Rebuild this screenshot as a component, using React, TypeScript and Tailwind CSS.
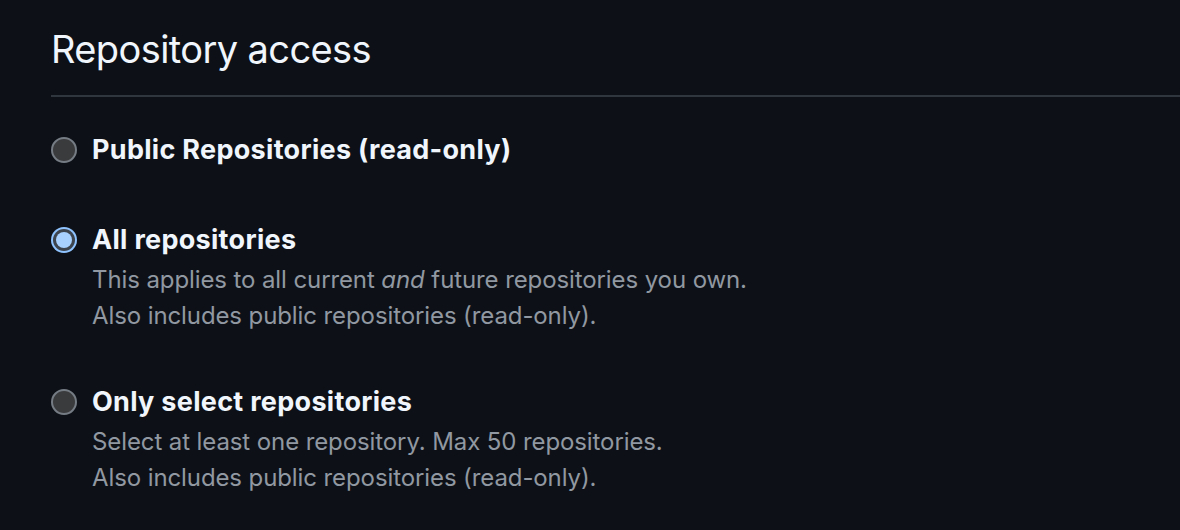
import React from "react";

interface Option {
  id: string;
  label: string;
  description?: React.ReactNode[];
  checked?: boolean;
}

const options: Option[] = [
  { id: "public", label: "Public Repositories (read-only)" },
  {
    id: "all",
    label: "All repositories",
    checked: true,
    description: [
      <>
        This applies to all current <em>and</em> future repositories you own.
      </>,
      <>Also includes public repositories (read-only).</>,
    ],
  },
  {
    id: "select",
    label: "Only select repositories",
    description: [
      <>Select at least one repository. Max 50 repositories.</>,
      <>Also includes public repositories (read-only).</>,
    ],
  },
];

function Radio({ checked }: { checked?: boolean }) {
  if (checked) {
    return (
      <span className="flex h-[26px] w-[26px] shrink-0 items-center justify-center rounded-full bg-[#8fc3ff]">
        <span className="flex h-[22px] w-[22px] items-center justify-center rounded-full bg-[#3d444d]">
          <span className="h-[16px] w-[16px] rounded-full bg-[#a8d1ff]" />
        </span>
      </span>
    );
  }
  return (
    <span className="h-[26px] w-[26px] shrink-0 rounded-full border-2 border-[#767c84] bg-[#3a3b3d]" />
  );
}

export default function App() {
  return (
    <div
      className="h-[530px] w-[1180px] overflow-hidden bg-[#0d1117] pl-[51px] pt-[25px]"
      style={{ fontFamily: "Inter, 'Noto Sans', sans-serif" }}
    >
      <h2 className="text-[38px] leading-[48px] tracking-[-0.6px] text-[#f0f6fc]">Repository access</h2>
      <div className="mt-[22px] h-[2px] bg-[#30363d]" />

      <div className="mt-[35px] flex flex-col">
        {options.map((opt, i) => (
          <label
            key={opt.id}
            className={i === 0 ? "flex items-start gap-[15px]" : i === 1 ? "mt-[54px] flex items-start gap-[15px]" : "mt-[50px] flex items-start gap-[15px]"}
          >
            <span className="flex h-[36px] items-center">
              <Radio checked={opt.checked} />
            </span>
            <div className="flex flex-col">
              <span className="text-[27px] font-bold leading-[36px] tracking-[0.3px] text-[#f0f6fc]">
                {opt.label}
              </span>
              {opt.description && (
                <div className="mt-[4px] text-[24px] leading-[36px] tracking-[-0.1px] text-[#9198a1]">
                  {opt.description.map((line, j) => (
                    <div key={j}>{line}</div>
                  ))}
                </div>
              )}
            </div>
          </label>
        ))}
      </div>
    </div>
  );
}
